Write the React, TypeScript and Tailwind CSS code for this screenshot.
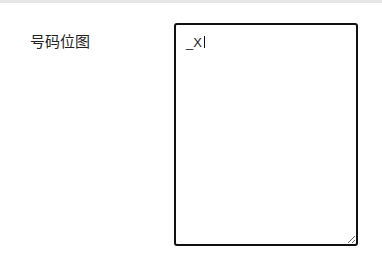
import React from "react";

export default function App() {
  return (
    <div className="w-[382px] h-[256px] bg-white border-t-[3px] border-[#e6e6e6] overflow-hidden font-['Liberation_Sans','Noto_Sans_CJK_SC',sans-serif]">
      <div className="flex pt-[20px]">
        <div className="w-[174px] pl-[30px] pt-[8px] text-[15px] leading-[20px] text-[#222] font-['Noto_Sans_CJK_SC',sans-serif]">
          号码位图
        </div>
        <div className="relative">
          <textarea
            defaultValue="_X"
            className="block w-[184px] h-[223px] border-2 border-[#111] rounded-[3px] outline-none px-[10px] py-[9px] text-[13px] leading-[18px] text-[#222] resize font-['Liberation_Sans',sans-serif]"
          />
          <span className="absolute left-[30px] top-[13px] w-px h-[12px] bg-[#111] pointer-events-none" />
        </div>
      </div>
    </div>
  );
}
